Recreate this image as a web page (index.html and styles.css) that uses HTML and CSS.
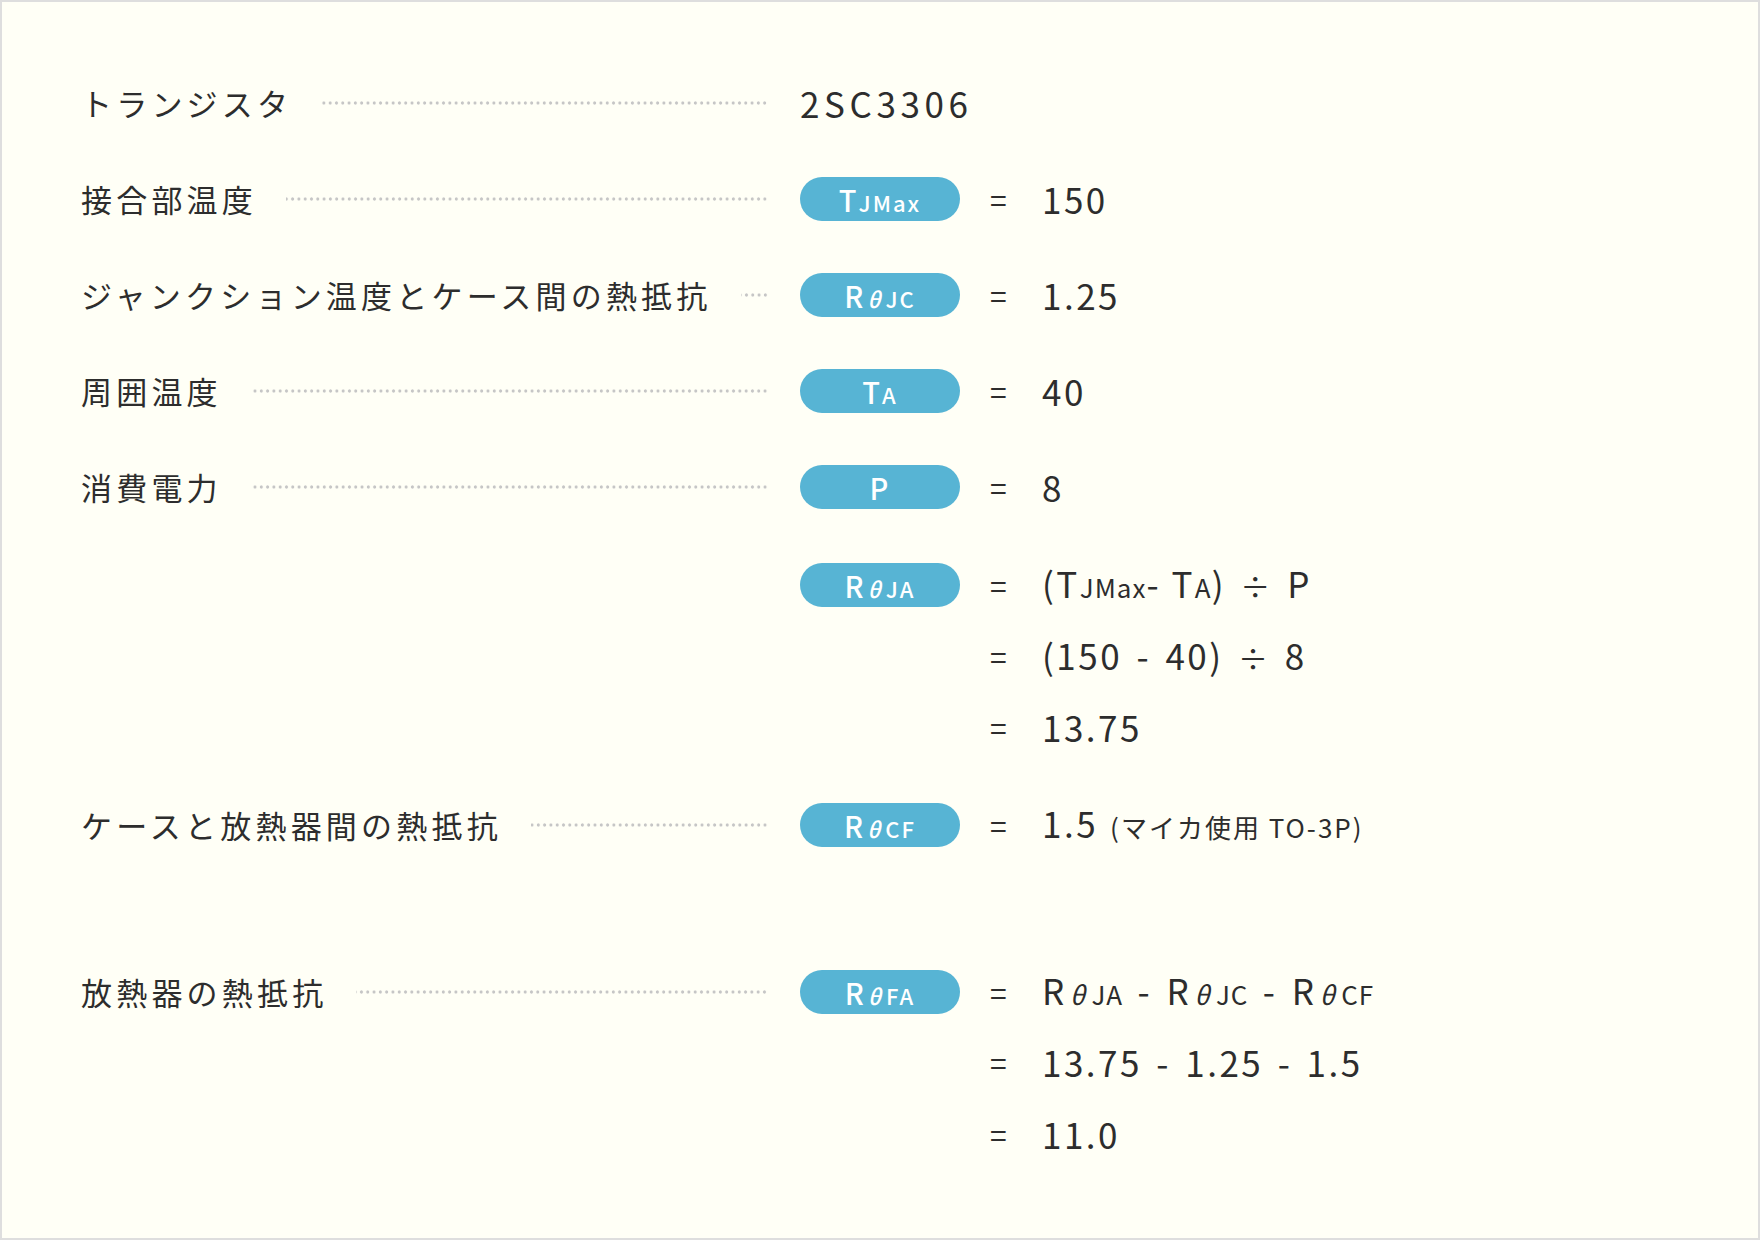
FILE: index.html
```html
<!DOCTYPE html>
<html lang="ja">
<head>
<meta charset="utf-8">
<title>放熱器の熱抵抗</title>
<link rel="stylesheet" href="styles.css">
</head>
<body>
<div class="card">
  <div class="rows">
    <div class="group">
      <div class="row">
        <div class="label"><span class="label-text">トランジスタ</span><span class="dots"></span></div>
        <div class="val model">2SC3306</div>
      </div>
    </div>

    <div class="group">
      <div class="row">
        <div class="label"><span class="label-text">接合部温度</span><span class="dots"></span></div>
        <div class="pill"><span class="big">T</span><span class="sm">JMax</span></div>
        <div class="eq">=</div>
        <div class="val">150</div>
      </div>
    </div>

    <div class="group">
      <div class="row">
        <div class="label"><span class="label-text">ジャンクション温度とケース間の熱抵抗</span><span class="dots"></span></div>
        <div class="pill"><span class="big">R</span><span class="th">θ</span><span class="sm">JC</span></div>
        <div class="eq">=</div>
        <div class="val">1.25</div>
      </div>
    </div>

    <div class="group">
      <div class="row">
        <div class="label"><span class="label-text">周囲温度</span><span class="dots"></span></div>
        <div class="pill"><span class="big">T</span><span class="sm">A</span></div>
        <div class="eq">=</div>
        <div class="val">40</div>
      </div>
    </div>

    <div class="group">
      <div class="row">
        <div class="label"><span class="label-text">消費電力</span><span class="dots"></span></div>
        <div class="pill"><span class="big">P</span></div>
        <div class="eq">=</div>
        <div class="val">8</div>
      </div>
    </div>

    <div class="group">
      <div class="row">
        <div class="label"></div>
        <div class="pill"><span class="big">R</span><span class="th">θ</span><span class="sm">JA</span></div>
        <div class="eq">=</div>
        <div class="val">(T<span class="vsm">JMax</span>- T<span class="vsm">A</span>) <span class="op">÷</span> P</div>
      </div>
      <div class="row sub">
        <div class="eq">=</div>
        <div class="val">(150 <span class="mn">-</span> 40) <span class="op">÷</span> 8</div>
      </div>
      <div class="row sub">
        <div class="eq">=</div>
        <div class="val">13.75</div>
      </div>
    </div>

    <div class="group">
      <div class="row">
        <div class="label"><span class="label-text">ケースと放熱器間の熱抵抗</span><span class="dots"></span></div>
        <div class="pill"><span class="big">R</span><span class="th">θ</span><span class="sm">CF</span></div>
        <div class="eq">=</div>
        <div class="val">1.5<span class="note">(マイカ使用 TO-3P)</span></div>
      </div>
    </div>

    <div class="group last">
      <div class="row">
        <div class="label"><span class="label-text">放熱器の熱抵抗</span><span class="dots"></span></div>
        <div class="pill"><span class="big">R</span><span class="th">θ</span><span class="sm">FA</span></div>
        <div class="eq">=</div>
        <div class="val">R<span class="vth">θ</span><span class="vsm">JA</span> <span class="mn">-</span> R<span class="vth">θ</span><span class="vsm">JC</span> <span class="mn">-</span> R<span class="vth">θ</span><span class="vsm">CF</span></div>
      </div>
      <div class="row sub">
        <div class="eq">=</div>
        <div class="val">13.75 <span class="mn">-</span> 1.25 <span class="mn">-</span> 1.5</div>
      </div>
      <div class="row sub">
        <div class="eq">=</div>
        <div class="val">11.0</div>
      </div>
    </div>
  </div>
</div>
</body>
</html>
```

FILE: styles.css
```css
* { box-sizing: border-box; }

html, body {
  margin: 0;
  padding: 0;
  background: #fffff6;
}

body {
  font-family: "Noto Sans CJK JP", "Noto Sans", sans-serif;
  color: #2d2d2d;
}

.card {
  width: 1760px;
  height: 1240px;
  border: 2px solid #dedede;
  background: #fffff6;
  padding: 79px 0 0 79px;
}

.rows {
  display: flex;
  flex-direction: column;
  gap: 52px;
}

.group {
  display: flex;
  flex-direction: column;
  gap: 28px;
}

.group.last {
  margin-top: 71px;
}

.row {
  display: grid;
  grid-template-columns: 719px 190px 52px auto;
  align-items: center;
  height: 44px;
}

.row.sub .eq {
  grid-column: 3;
}

.label {
  display: flex;
  align-items: center;
  width: 687px;
}

.label-text {
  font-size: 31px;
  letter-spacing: 4.2px;
  line-height: 44px;
  white-space: nowrap;
}

.dots {
  flex: 1;
  height: 6px;
  margin-left: 29px;
  background-image: radial-gradient(circle at center, #c6c6c6 1.3px, rgba(198,198,198,0) 1.9px);
  background-size: 6.3px 6px;
  background-repeat: repeat-x;
  background-position: right center;
}

.pill {
  width: 160px;
  height: 44px;
  border-radius: 22px;
  background: #57b4d4;
  color: #ffffff;
  display: flex;
  align-items: baseline;
  justify-content: center;
  line-height: 44px;
  font-weight: 500;
  letter-spacing: 2px;
}

.pill .big {
  font-size: 29px;
}

.pill .sm {
  font-size: 22px;
}

.pill .th {
  font-size: 22px;
  font-style: italic;
  margin: 0 3px 0 2px;
}

.eq {
  font-size: 30px;
  line-height: 44px;
}

.val {
  font-size: 35px;
  line-height: 44px;
  letter-spacing: 2.5px;
  white-space: nowrap;
}

.val.model {
  grid-column: 2 / 5;
  letter-spacing: 4.6px;
}

.mn {
  margin: 0 4px;
}

.vsm {
  font-size: 26px;
  letter-spacing: 1px;
}

.vth {
  font-size: 26px;
  font-style: italic;
  margin: 0 4px 0 3px;
}

.op {
  font-size: 30px;
  margin: 0 4px;
}

.note {
  font-size: 26px;
  letter-spacing: 2px;
  margin-left: 12px;
}
```
